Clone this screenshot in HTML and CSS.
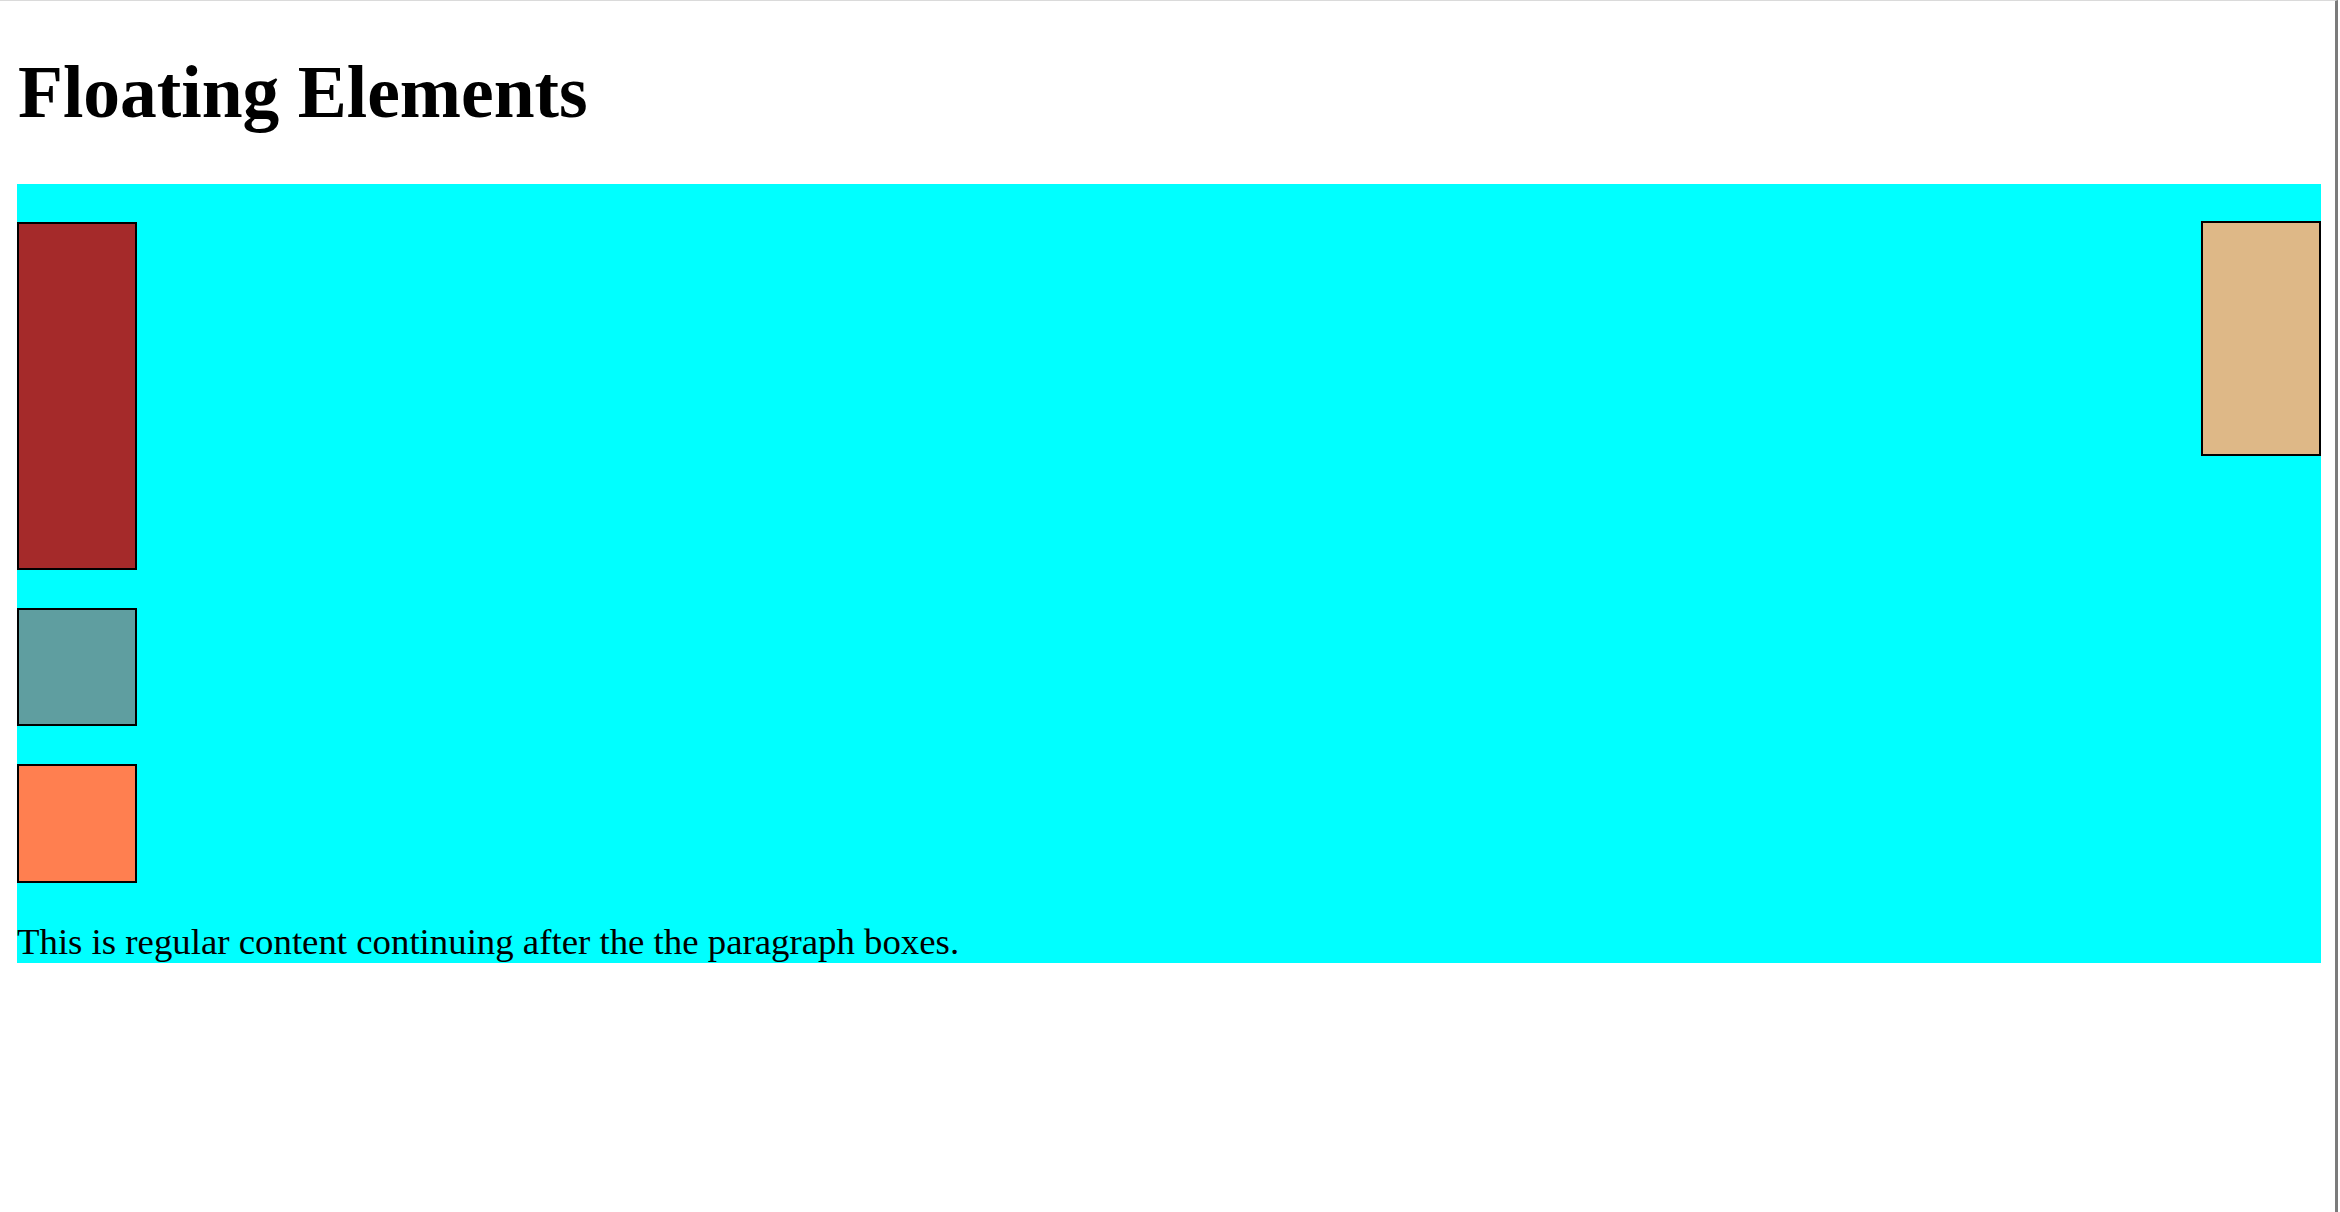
FILE: index.html
```html
<!DOCTYPE html>
<html lang="en">
<head>
<meta charset="utf-8">
<title>Floating Elements</title>
<link rel="stylesheet" href="styles.css">
</head>
<body>
<div class="window">
  <h1 class="title">Floating Elements</h1>
  <div class="container">
    <div class="box box-brown"></div>
    <div class="box box-tan"></div>
    <div class="box box-cadet"></div>
    <div class="box box-coral"></div>
    <p class="content">This is regular content continuing after the the paragraph boxes.</p>
  </div>
</div>
</body>
</html>
```
FILE: styles.css
```css
html, body {
  margin: 0;
  padding: 0;
  background: #ffffff;
}

body {
  font-family: "Liberation Serif", "Times New Roman", serif;
  color: #000000;
}

.window {
  box-sizing: border-box;
  width: 2338px;
  min-height: 1212px;
  border-top: 1px solid #dadada;
  border-right: 3px solid #7b7b7b;
  overflow: hidden;
}

.title {
  margin: 50px 0 49px 18px;
  font-size: 73.5px;
  line-height: 84px;
  font-weight: bold;
}

.container {
  display: flow-root;
  margin-left: 17px;
  width: 2304px;
  padding-top: 38px;
  background: #00ffff;
}

.box {
  box-sizing: border-box;
  width: 120px;
  border: 2px solid #000000;
  margin-bottom: 38px;
}

.box-brown {
  float: left;
  height: 348px;
  background: #a52a2a;
}

.box-tan {
  float: right;
  height: 235px;
  margin-top: -1px;
  background: #deb887;
}

.box-cadet {
  float: left;
  clear: left;
  height: 118px;
  background: #5f9ea0;
}

.box-coral {
  float: left;
  clear: left;
  height: 119px;
  background: #ff7f50;
}

.content {
  clear: both;
  margin: 0;
  font-size: 36.8px;
  line-height: 42px;
}
```
